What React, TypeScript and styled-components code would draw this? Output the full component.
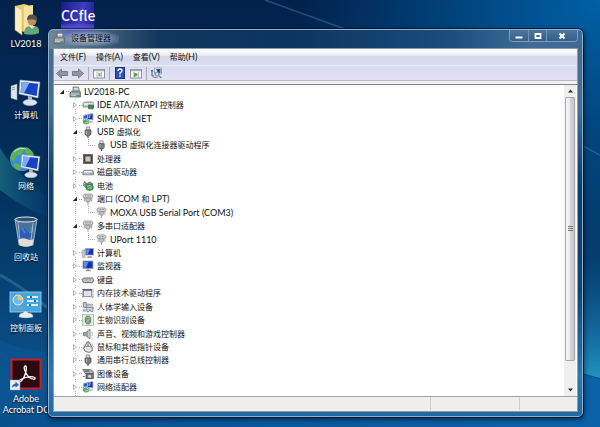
import React from 'react';
import styled, { createGlobalStyle, css } from 'styled-components';

const GlobalStyle = createGlobalStyle`
  * { box-sizing: border-box; }
  html, body, #root { height: 100%; margin: 0; }
  body {
    font: 8px/12px "Open Sans", "Noto Sans CJK SC", sans-serif;
    color: #111;
    overflow: hidden;
  }
  button {
    font: inherit;
    color: inherit;
    border: 0;
    padding: 0;
    margin: 0;
    background: none;
  }
  svg { display: block; flex: none; }
`;

/* ---------- Text ---------- */

const Latin = styled.span`
  font-family: Lato, sans-serif;
  font-size: 9px;
`;

const Label = ({ text }: { text: string }) => (
  <span>
    {text.split(/([\x20-\x7e\n]+)/).filter(Boolean).map((run, i) => (
      /^[\x20-\x7e\n]/.test(run) ? <Latin key={i}>{run}</Latin> : run
    ))}
  </span>
);

/* ---------- Desktop ---------- */

const Desktop = styled.main`
  position: relative;
  height: 100%;
  overflow: hidden;
  background:
    radial-gradient(ellipse 300px 260px at 100% 0%, #0061a6 0%, rgba(0, 97, 166, 0) 100%),
    linear-gradient(180deg, #02224c 0%, #032a56 25%, #033562 48%, #074577 70%, #0a4f88 86%, #085394 100%);
`;

const Wallpaper = styled.svg`
  position: absolute;
  inset: 0;
  width: 100%;
  height: 100%;
`;

const IconColumn = styled.nav`
  position: relative;
  display: flex;
  flex-direction: column;
  gap: 13px;
  width: 52px;
  padding-top: 2px;
`;

const Shortcut = styled.button`
  display: flex;
  flex-direction: column;
  align-items: center;
  height: 58px;
  gap: 2px;
  color: #fff;
  line-height: 11px;
  white-space: pre;
  text-shadow: 0 1px 2px #000;
`;

const Picture = styled.span`
  display: grid;
  place-items: end center;
  height: 34px;
`;

const FlexShortcut = styled.button`
  position: absolute;
  left: 61px;
  top: 2px;
  width: 33px;
  height: 32px;
  color: #f0f0ff;
  background:
    linear-gradient(transparent 21px, rgba(110, 95, 225, 0.55) 24px),
    linear-gradient(100deg, #1b1a86, #3f3cc0 60%, #201b8c);
  font: 500 14px/24px "Noto Sans CJK SC", sans-serif;
  padding-bottom: 6px;
`;

/* ---------- Window ---------- */

const Window = styled.section`
  position: absolute;
  inset: 29px 17px 10px 48px;
  display: flex;
  flex-direction: column;
  padding: 0 4px 4px;
  border: 1px solid #8fb0cb;
  border-radius: 5px;
  background: linear-gradient(90deg, #6f8798 0, #12365d 110px, #0b3560 45%, #1b4c7b 75%, #3e6c97 90%, #3d6b94 100%);
  box-shadow: 0 0 0 1px rgba(0, 16, 40, 0.75), 1px 2px 5px rgba(0, 10, 30, 0.7);
`;

const FrameTint = styled.div`
  position: absolute;
  inset: 19px 0 0;
  border-radius: 0 0 4px 4px;
  background: linear-gradient(180deg, #496b87 0, #47708f 60px, #123f6b 130px, #13436f 240px, #2f79ac 325px, #2169a2 100%);
`;

const TitleBar = styled.header`
  position: relative;
  display: flex;
  align-items: flex-start;
  height: 18px;
`;

const TitleGlow = styled.h1`
  position: relative;
  display: flex;
  align-items: center;
  gap: 6px;
  height: 16px;
  margin: 0;
  padding-right: 8px;
  flex: none;
  font-size: 8px;
  font-weight: 400;
  color: #050c18;
  background: radial-gradient(ellipse at 54% 55%, rgba(190, 205, 218, 0.75) 0%, rgba(150, 175, 200, 0.45) 45%, transparent 72%);
  text-shadow: 0 0 3px #b9c9d6;
`;

const Reflection = styled.span`
  position: absolute;
  left: 10px;
  top: 0;
  width: 32px;
  height: 5px;
  background: #5a50d0;
  filter: blur(3px);
`;

const Caption = styled.div`
  display: flex;
  margin-left: auto;
  height: 12px;
  border: 1px solid #7d9db8;
  border-top: 0;
  border-radius: 0 0 4px 4px;
`;

const CaptionButton = styled.button<{ $wide?: boolean }>`
  display: grid;
  place-items: center;
  width: ${(p) => (p.$wide ? 31 : 18)}px;
  background: linear-gradient(#4e769c, #345f8b);
  & + & { border-left: 1px solid #7193b0; }
  &:first-child { border-radius: 0 0 0 3px; }
  &:last-child { border-radius: 0 0 3px 0; }
`;

const Client = styled.div`
  position: relative;
  flex: 1;
  min-height: 0;
  display: flex;
  flex-direction: column;
  border: 1px solid #8b9dad;
  background: #f2f2f5;
`;

const MenuBar = styled.nav`
  display: flex;
  gap: 10px;
  height: 16px;
  padding-left: 6px;
  background: linear-gradient(#fff 0, #eef0f8 6px, #d5daeb 7px, #d8ddf0 100%);
`;

const MenuButton = styled.button`
  line-height: 16px;
`;

const ToolBar = styled.div`
  display: flex;
  align-items: center;
  gap: 4px;
  height: 16px;
  padding-left: 2px;
  border-top: 1px solid #eceef8;
  border-bottom: 1px solid #b8bac8;
  background: linear-gradient(#d9dbf1, #e2e2f5);
`;

const ToolButton = styled.button`
  display: grid;
  place-items: center;
  width: 12px;
  height: 13px;
`;

const Separator = styled.span`
  width: 1px;
  height: 13px;
  background: #a5a9bb;
`;

const Pane = styled.div`
  flex: 1;
  min-height: 0;
  display: flex;
  margin-top: 3px;
  border-top: 1px solid #808388;
  background: #fff;
`;

const Tree = styled.ul`
  flex: 1;
  display: flex;
  flex-direction: column;
  margin: 0;
  padding: 0 0 2px 4px;
  list-style: none;
  background: repeating-linear-gradient(180deg, #b5b5b5 0 1px, transparent 1px 2px) 21px 0 / 1px 100% no-repeat;
`;

const Item = styled.li<{ $depth: number }>`
  flex: 1;
  display: flex;
  align-items: center;
  min-height: 0;
  padding-left: ${(p) => p.$depth * 13}px;
  white-space: nowrap;
  ${(p) => p.$depth === 0 && css`background: #fff;`}
`;

const Expander = styled.button`
  display: grid;
  place-items: center;
  width: 8px;
  height: 8px;
  flex: none;
  background: #fff;
`;

const Dash = styled.span`
  width: 3px;
  border-top: 1px dotted #a8a8a8;
`;

const Elbow = styled.span`
  align-self: flex-start;
  width: 7px;
  height: 7px;
  margin-left: 4px;
  border: 1px dotted #a8a8a8;
  border-width: 0 0 1px 1px;
`;

const Glyph = styled.span`
  display: grid;
  place-items: center;
  width: 12px;
  margin-right: 3px;
  flex: none;
`;

const ScrollBar = styled.div`
  display: flex;
  flex-direction: column;
  width: 12px;
  margin-right: 1px;
  background: #efefef;
`;

const ScrollArrow = styled.button`
  display: grid;
  place-items: center;
  height: 12px;
`;

const Track = styled.div`
  flex: 1;
  padding-bottom: 23px;
`;

const Thumb = styled.div`
  display: grid;
  place-items: center;
  height: 100%;
  margin: 0 1px;
  border: 1px solid #a9a9ab;
  border-radius: 1px;
  background: linear-gradient(90deg, #f8f8f8 0, #e9e9eb 45%, #cfcfd2 60%, #c9c9cd 100%);
`;

const StatusBar = styled.footer`
  display: grid;
  grid-template-columns: 375fr 89fr 58fr;
  height: 15px;
  border-top: 1px solid #9fa3a5;
  background: #f0eeed;
`;

const StatusCell = styled.span`
  margin-bottom: 1px;
  & + & { border-left: 1px solid #cfcdcc; }
`;

/* ---------- Small device icons ---------- */

type IconName =
  | 'computer' | 'ide' | 'net' | 'usb' | 'cpu' | 'disk' | 'battery' | 'port' | 'pc'
  | 'monitor' | 'keyboard' | 'memory' | 'hid' | 'finger' | 'sound' | 'mouse' | 'camera';

const glyphs: Record<IconName, React.ReactNode> = {
  computer: (
    <>
      <path d="M4 1h5l1 1v4H4z" fill="#aab4bd" stroke="#66717b" strokeWidth=".7" />
      <path d="M5 2.5h4M5 4h4" stroke="#eef3f6" strokeWidth=".8" />
      <path d="M1 7l2-2h8l.5 2v4H1z" fill="#8d979f" stroke="#535d66" strokeWidth=".7" />
      <path d="M2 8h8M2 9.7h5" stroke="#dce2e6" strokeWidth=".8" />
      <path d="M8.5 9.7h2" stroke="#3a9a50" />
    </>
  ),
  ide: (
    <>
      <path d="M1 4.5l1.5-1.5h8L12 4.5V8H1z" fill="#c4c8cb" stroke="#73797e" strokeWidth=".8" />
      <path d="M2 5h9" stroke="#fff" />
      <rect x="6.5" y="6" width="5" height="3.5" fill="#3f8a4d" stroke="#266334" strokeWidth=".6" />
      <path d="M7.5 9.5v1.2M9 9.5v1.2M10.5 9.5v1.2" stroke="#555" strokeWidth=".6" />
    </>
  ),
  net: (
    <>
      <circle cx="4.2" cy="8" r="3.4" fill="#57a869" />
      <path d="M1.5 7q2-2 3.5 0t3 1M3 10.5q1-2 3-.6" stroke="#c7e9cf" strokeWidth=".8" fill="none" />
      <path d="M1.500 2.500l4-1v4l-4 .5z" fill="#2f55c9" stroke="#a8b6cf" strokeWidth=".8" />
      <path d="M5.500 1.500l5.500-1v6.500l-5.500-.7z" fill="#1733b5" stroke="#a8b6cf" strokeWidth=".9" />
      <path d="M6.500 2.400l2.600-.5-1.600 3.400-1-.2z" fill="#7fa2ee" />
      <ellipse cx="9" cy="9" rx="2.5" ry="1" fill="#bcc4cc" />
    </>
  ),
  usb: (
    <>
      <rect x="4.2" y="1" width="3.6" height="3" fill="#dedede" stroke="#777" strokeWidth=".7" />
      <path d="M3 4h6v4L7.600 9.800H4.400L3 8z" fill="#7c7f82" stroke="#45484b" strokeWidth=".7" />
      <path d="M4.500 4.700V8" stroke="#c1c4c6" strokeWidth=".9" />
      <path d="M6 9.800V12" stroke="#555" strokeWidth="1.2" />
    </>
  ),
  cpu: (
    <>
      <rect x="1" y="1" width="10" height="10" rx=".6" fill="#57534e" />
      <rect x="1.500" y="1.500" width="9" height="9" fill="none" stroke="#8d8880" strokeDasharray="1 1" strokeWidth=".8" />
      <rect x="3" y="3" width="6" height="6" fill="#c8c4bb" stroke="#24221f" strokeWidth=".6" />
    </>
  ),
  disk: (
    <>
      <path d="M.8 6.500q0-2.300 3-2.300h5q2.800 0 2.800 2.300v2.300H.8z" fill="#b8bdc1" stroke="#73797e" strokeWidth=".8" />
      <path d="M2 5.800h8" stroke="#f5f7f8" strokeWidth="1.2" />
      <path d="M8.500 7.800h2" stroke="#4aa657" />
    </>
  ),
  battery: (
    <>
      <path d="M1 5l7-3 3 2-6 4z" fill="#93999b" stroke="#54595b" strokeWidth=".7" />
      <path d="M.8 3.500l3-1.300M2 1l2 3" stroke="#555" strokeWidth=".8" />
      <ellipse cx="7.500" cy="7.300" rx="3.800" ry="3.200" fill="#3f9a4d" stroke="#24622e" strokeWidth=".6" />
      <path d="M5 6.600q2.300-2 4.500-.4M5.500 9q2-1.800 4.500-.8" stroke="#b6e3b9" strokeWidth=".8" fill="none" />
    </>
  ),
  port: (
    <>
      <path d="M1 2.500L2.300 1h7.400L11 2.500 10 5H2z" fill="#d3d6d8" stroke="#8b8f92" strokeWidth=".8" />
      <path d="M3 2.800h6" stroke="#666" strokeWidth=".8" strokeDasharray="1 .7" />
      <path d="M3.700 5h4.600v2.400L7.400 9H4.600l-.9-1.600z" fill="#bcc0c3" stroke="#84888b" strokeWidth=".7" />
      <path d="M6 9v3M2.300 5v3.500M9.700 5v3.500" stroke="#999da0" strokeWidth="1" />
    </>
  ),
  pc: (
    <>
      <rect x=".8" y="3" width="2.200" height="7.500" fill="#cdd2d8" stroke="#7b838b" strokeWidth=".6" />
      <rect x="3.500" y="1.500" width="8" height="6.500" fill="#1733b5" stroke="#9aa7bd" strokeWidth=".8" />
      <path d="M4.200 2.200h3.800L5.800 7.300H4.200z" fill="#6f91e6" />
      <path d="M5.300 10h4.500" stroke="#8d969f" strokeWidth="1.500" />
    </>
  ),
  monitor: (
    <>
      <rect x="1" y="1" width="10" height="7.500" fill="#1733b5" stroke="#9aa7bd" strokeWidth=".9" />
      <path d="M1.800 1.800h4.700L4 7.800H1.800z" fill="#6386e2" />
      <path d="M6 8.500v1.300M3.700 10.500h5" stroke="#8d969f" strokeWidth="1.300" />
    </>
  ),
  keyboard: (
    <>
      <rect x=".7" y="4" width="10.600" height="4.600" rx="1.600" fill="#d8d8d8" stroke="#555" strokeWidth=".9" />
      <path d="M2.300 5.600h7.500M2.300 7h7.500" stroke="#777" strokeWidth=".7" strokeDasharray="1 .5" />
    </>
  ),
  memory: (
    <>
      <rect x="1.500" y="2.500" width="8" height="7" fill="#e3e2f2" stroke="#7d7c99" strokeWidth=".8" />
      <path d="M1 3h9" stroke="#4f4d7c" strokeWidth="1.400" />
      <path d="M.8 2v9M11 2v8.500H9.500" stroke="#555" strokeWidth=".7" fill="none" strokeDasharray="1.200 .5" />
    </>
  ),
  hid: (
    <>
      <path d="M1 2l3-1 .8 5L2 7z" fill="#c5c8cb" stroke="#6b7074" strokeWidth=".8" />
      <path d="M5 3.200h6.300M5 5h6.300" stroke="#8a8f93" strokeWidth="1.100" />
      <path d="M4.500 6.500h6.800l-.5 4.200H9L8 8.700 6.800 10.700H5z" fill="#c5d5dc" stroke="#5b7684" strokeWidth=".7" />
      <path d="M.8 8.300h3v2.200h-3z" fill="#9da2a6" />
    </>
  ),
  finger: (
    <>
      <rect x=".6" y=".6" width="10.800" height="10.800" fill="#dcebdc" stroke="#9cbb9e" strokeWidth=".7" />
      <ellipse cx="6" cy="6" rx="2.800" ry="4" fill="#b9c6ba" stroke="#4f5f52" strokeWidth=".8" />
      <ellipse cx="6" cy="6.200" rx="1.200" ry="2.300" fill="none" stroke="#4f5f52" strokeWidth=".8" />
      <path d="M4 8.500l4-4" stroke="#dcebdc" strokeWidth=".5" />
    </>
  ),
  sound: (
    <>
      <path d="M1.500 4.500h2.300L8 1v10L3.800 7.800H1.500z" fill="#9da2a6" stroke="#63686c" strokeWidth=".7" />
      <path d="M7 2.500v7" stroke="#e6e9eb" />
      <path d="M9.700 4q1.300 2 0 4" fill="none" stroke="#9da2a6" strokeWidth=".8" />
    </>
  ),
  mouse: (
    <>
      <path d="M5 1h2.200l3 6q.8 4.300-3.600 4.300T1.800 7.500z" fill="#e6e6e6" stroke="#4c4c4c" strokeWidth=".8" />
      <path d="M6 1.500v4M3.600 5.700q2.400-1.600 4.800 0" fill="none" stroke="#666" strokeWidth=".8" />
      <path d="M2.300 3.500L1 8M9.500 2.500l1.800 3" stroke="#888" strokeWidth=".6" />
    </>
  ),
  camera: (
    <>
      <path d="M.7 1.500h7.600l3 2v2H3z" fill="#aeb3b7" stroke="#555b60" strokeWidth=".7" />
      <path d="M2.500 3h5" stroke="#43484c" />
      <rect x="4" y="5.700" width="7.300" height="5" fill="#73797e" stroke="#43484c" strokeWidth=".7" />
      <circle cx="7.600" cy="8.200" r="1.500" fill="#cfd9e2" />
      <path d="M.7 8.500h2.600" stroke="#8a8f93" />
    </>
  ),
};

const DeviceIcon = ({ name, size = 12 }: { name: IconName; size?: number }) => (
  <svg width={size} height={size} viewBox="0 0 12 12" aria-hidden="true">{glyphs[name]}</svg>
);

/* ---------- Desktop icons ---------- */

const UserFolder = () => (
  <svg width="32" height="34" viewBox="0 0 32 34">
    <path d="M5 4l9-2 4 1v25l-4 2-9-4z" fill="#e9ca72" />
    <path d="M14 4l9-1v24l-9 3z" fill="#f5e3a0" />
    <path d="M5 4l7 4v25l-7-5z" fill="#fbf0bd" stroke="#cda84c" strokeWidth=".5" />
    <circle cx="22" cy="19" r="4.500" fill="#c48b5f" />
    <path d="M17 18q0-6 5.500-5.500T27 19q-4-3-10-1z" fill="#54514a" />
    <path d="M14 32q0-7 5-8l3 2 3-2q5 1 4 7-6 3-15 1z" fill="#68a57d" />
    <path d="M20 24l2 3 3-3z" fill="#e2eadf" />
  </svg>
);

const Screen = () => (
  <>
    <path d="M11 3l20 2-2 16-19-4z" fill="#e4edf5" stroke="#93a6ba" strokeWidth=".5" />
    <path d="M12.500 5l16.700 1.700-1.500 12.300-16-3.400z" fill="#1740c4" />
    <path d="M12.500 5l8 .8L15 16.300l-3.300-.7z" fill="#7fa9f5" />
    <path d="M19 19l4 1v4h-4z" fill="#aebac5" />
    <ellipse cx="21" cy="25.500" rx="7" ry="3.200" fill="#dbe3ea" stroke="#8fa0ae" strokeWidth=".5" />
  </>
);

const Computer = () => (
  <svg width="34" height="30" viewBox="0 0 34 30">
    <path d="M2 9l6-2v16l-6-2z" fill="#dfe5ea" stroke="#8c9aa6" strokeWidth=".5" />
    <path d="M3 11l3-1M3 13l3-1" stroke="#76838f" strokeWidth=".7" />
    <Screen />
  </svg>
);

const Network = () => (
  <svg width="34" height="32" viewBox="0 0 34 32">
    <circle cx="13" cy="13" r="12" fill="#3b8ed0" />
    <path d="M3 7q4-6 10-6l2 4-4 4-4 1-3 6-3-4zM17 1q6 2 8 8l-5 1-4-4zM6 17l6 2-1 6q-5-2-7-6z" fill="#63b054" />
    <path d="M5 6q5-5 12-3" stroke="#c9eec3" fill="none" />
    <g transform="translate(3 6) scale(.9)"><Screen /></g>
  </svg>
);

const RecycleBin = () => (
  <svg width="28" height="34" viewBox="0 0 28 34">
    <path d="M3 4h22l-4 26q-7 3-14 0z" fill="#9fb9cc" fillOpacity=".45" stroke="#c9d7e2" strokeWidth=".7" />
    <ellipse cx="14" cy="4.500" rx="11" ry="2.500" fill="#31516d" stroke="#e3edf4" />
    <path d="M8 15l5-2 3 4 4 1-1 5-9 1-3-4z" fill="#2a5db8" />
    <path d="M10 13l3 5M19 12l2 4-4 2" stroke="#4c84dc" strokeWidth="1.500" fill="none" />
    <path d="M6.500 25q4-3 8-1t7 0l-1 6q-7 3-13 0z" fill="#e2ded6" />
    <path d="M6 7l2 20M21 8l-2 17" stroke="#fff" strokeOpacity=".5" />
  </svg>
);

const ControlPanel = () => (
  <svg width="34" height="30" viewBox="0 0 34 30">
    <rect x="1" y="2" width="31" height="20" fill="#4aa4dc" stroke="#9bd5f4" strokeWidth=".8" />
    <circle cx="9" cy="10" r="5" fill="#6fbce8" stroke="#d8f0fc" />
    <path d="M9 10V5a5 5 0 0 1 5 5z" fill="#f2c36b" />
    <path d="M18 7h11M18 11h11M18 15h11" stroke="#d8f0fc" strokeWidth="1.800" />
    <path d="M21 7h2M25 11h2M20 15h2" stroke="#1f6da8" strokeWidth="1.800" />
    <path d="M5 18h8" stroke="#e58a6f" strokeDasharray="2 1" />
    <path d="M10 27q0-4 4-4 2-4 5 0 5 0 5 4-7 2-14 0z" fill="#e9eef2" stroke="#a5b2bd" strokeWidth=".5" />
  </svg>
);

const Acrobat = () => (
  <svg width="32" height="33" viewBox="0 0 32 33">
    <rect x="1.500" y="1.500" width="29" height="29" fill="#2c0b10" stroke="#c81f2a" strokeWidth="2" />
    <path
      d="M15.500 8c-2 0-1.500 3 .2 6.500 2 4 5 6.700 8 6.700 2 0 2-2-.5-2.400-4-.6-9 .7-12.500 2.700-2.500 1.500-2 3-.7 2.500 2-1 4.500-5.500 5.700-9.500.8-3 1-6.500-.2-6.500z"
      fill="none" stroke="#fff" strokeWidth="1.300"
    />
    <rect x="0" y="22" width="10" height="10" fill="#e9f0f8" stroke="#8798a8" strokeWidth=".5" />
    <path d="M2 30q0-4 3.500-4.500V23.500L9 27l-3.500 2.500V28Q3.500 28 2 30z" fill="#2866b4" />
  </svg>
);

const shortcuts = [
  { label: 'LV2018', icon: <UserFolder /> },
  { label: '计算机', icon: <Computer /> },
  { label: '网络', icon: <Network /> },
  { label: '回收站', icon: <RecycleBin /> },
  { label: '控制面板', icon: <ControlPanel /> },
  { label: 'Adobe\nAcrobat DC', icon: <Acrobat /> },
];

/* ---------- Toolbar drawings ---------- */

const Arrow = ({ flip }: { flip?: boolean }) => (
  <svg width="12" height="11" viewBox="0 0 12 11">
    <path
      d={flip ? 'M11.500 5.500L6.500 1v2.500h-6v4h6V10z' : 'M.5 5.500L5.500 1v2.500h6v4h-6V10z'}
      fill="#92979f" stroke="#6a6f78" strokeWidth=".8"
    />
  </svg>
);

const PaneIcon = ({ play }: { play?: boolean }) => (
  <svg width="12" height="11" viewBox="0 0 12 11">
    <rect x=".5" y="1.500" width="11" height="8.500" fill="#f8f9f8" stroke="#8e949c" />
    <path d="M1 2.500h10" stroke="#a9afba" strokeWidth="1.500" />
    <path d="M4 4v6M8.500 4v6M5 5.500h2.500M5 8h2.500" stroke="#a3a9a5" strokeWidth=".8" />
    {play ? <path d="M4 4.500l4 2.300L4 9z" fill="#45a53e" /> : <path d="M5.500 5.500h2V8h-2z" fill="#6eae63" />}
  </svg>
);

const HelpIcon = () => (
  <svg width="10" height="12" viewBox="0 0 10 12">
    <rect x=".5" y=".5" width="9" height="11" fill="#2b53b8" stroke="#173682" />
    <path d="M3 4q0-2 2-2t2 1.800Q7 5 5 6v1.500M5 8.500V10" fill="none" stroke="#fff" strokeWidth="1.300" />
  </svg>
);

const ScanIcon = () => (
  <svg width="12" height="12" viewBox="0 0 12 12">
    <path d="M3.500 1h7v6h-7z" fill="#edf2f7" stroke="#8995a3" strokeWidth=".8" />
    <path d="M5 2h4.500v4H7z" fill="#2c4da5" />
    <path d="M1 3v6h2M1 3l-.7 1.500M1 3l1 1.500" stroke="#555f6b" fill="none" />
    <circle cx="6" cy="7" r="2" fill="#c9dced" stroke="#5d6c7b" strokeWidth=".8" />
    <path d="M7.500 8.500l3 2.500M2.500 10.500h4" stroke="#747e89" strokeWidth="1.100" />
  </svg>
);

/* ---------- Data ---------- */

type Device = { label: string; icon: IconName; depth: number; open?: boolean };

const devices: Device[] = [
  { label: 'LV2018-PC', icon: 'computer', depth: 0, open: true },
  { label: 'IDE ATA/ATAPI 控制器', icon: 'ide', depth: 1 },
  { label: 'SIMATIC NET', icon: 'net', depth: 1 },
  { label: 'USB 虚拟化', icon: 'usb', depth: 1, open: true },
  { label: 'USB 虚拟化连接器驱动程序', icon: 'usb', depth: 2 },
  { label: '处理器', icon: 'cpu', depth: 1 },
  { label: '磁盘驱动器', icon: 'disk', depth: 1 },
  { label: '电池', icon: 'battery', depth: 1 },
  { label: '端口 (COM 和 LPT)', icon: 'port', depth: 1, open: true },
  { label: 'MOXA USB Serial Port (COM3)', icon: 'port', depth: 2 },
  { label: '多串口适配器', icon: 'port', depth: 1, open: true },
  { label: 'UPort 1110', icon: 'port', depth: 2 },
  { label: '计算机', icon: 'pc', depth: 1 },
  { label: '监视器', icon: 'monitor', depth: 1 },
  { label: '键盘', icon: 'keyboard', depth: 1 },
  { label: '内存技术驱动程序', icon: 'memory', depth: 1 },
  { label: '人体学输入设备', icon: 'hid', depth: 1 },
  { label: '生物识别设备', icon: 'finger', depth: 1 },
  { label: '声音、视频和游戏控制器', icon: 'sound', depth: 1 },
  { label: '鼠标和其他指针设备', icon: 'mouse', depth: 1 },
  { label: '通用串行总线控制器', icon: 'usb', depth: 1 },
  { label: '图像设备', icon: 'camera', depth: 1 },
  { label: '网络适配器', icon: 'net', depth: 1 },
];

const menus = ['文件(F)', '操作(A)', '查看(V)', '帮助(H)'];

const DeviceRow = ({ label, icon, depth, open }: Device) => (
  <Item $depth={depth} role="treeitem" aria-level={depth + 1} aria-expanded={depth < 2 ? !!open : undefined}>
    {depth < 2 ? (
      <>
        <Expander aria-label={`${open ? '折叠' : '展开'} ${label}`}>
          <svg width="6" height="6" viewBox="0 0 6 6">
            {open
              ? <path d="M5 .8V5H.8z" fill="#222" />
              : <path d="M1.500 .6L4.500 3 1.500 5.400z" fill="#fff" stroke="#a0a0a0" strokeWidth=".8" />}
          </svg>
        </Expander>
        <Dash />
      </>
    ) : <Elbow />}
    <Glyph><DeviceIcon name={icon} size={depth === 2 ? 11 : 12} /></Glyph>
    <Label text={label} />
  </Item>
);

export default function App() {
  return (
    <>
      <GlobalStyle />
      <Desktop>
        <Wallpaper viewBox="0 0 600 427" preserveAspectRatio="none" aria-hidden="true">
          <defs>
            <linearGradient id="teal" x1="0" y1="0" x2="1" y2="0">
              <stop offset="0" stopColor="#1b6f84" stopOpacity=".75" />
              <stop offset="1" stopColor="#0a4a78" stopOpacity="0" />
            </linearGradient>
            <linearGradient id="glow" x1="0" y1="0" x2="0" y2="1">
              <stop offset="0" stopColor="#0a5a92" stopOpacity="0" />
              <stop offset="1" stopColor="#2191bd" />
            </linearGradient>
            <linearGradient id="base" x1="0" y1="0" x2="1" y2="0">
              <stop offset="0" stopColor="#08508c" />
              <stop offset="1" stopColor="#0b62aa" />
            </linearGradient>
          </defs>
          <path d="M0 148Q20 180 60 205V222Q25 210 0 190z" fill="url(#teal)" />
          <path d="M0 275Q25 288 60 318" stroke="#39759a" strokeOpacity=".6" strokeWidth="3" fill="none" />
          <path d="M0 340Q20 350 48 352V427H0z" fill="#0b5b9a" fillOpacity=".45" />
          <path d="M570 255H600V378L570 370z" fill="url(#glow)" />
          <path d="M570 371L600 379V427H0V416H570z" fill="url(#base)" />
          <path d="M265 0L345 29M583 146L600 155" stroke="#4a80ab" strokeOpacity=".45" strokeWidth="1.500" />
        </Wallpaper>

        <IconColumn aria-label="桌面">
          {shortcuts.map((s) => (
            <Shortcut key={s.label}>
              <Picture>{s.icon}</Picture>
              <Label text={s.label} />
            </Shortcut>
          ))}
        </IconColumn>
        <FlexShortcut>CCfle</FlexShortcut>

        <Window aria-label="设备管理器">
          <FrameTint />
          <TitleBar>
            <Reflection />
            <TitleGlow>
              <DeviceIcon name="computer" />
              <span>设备管理器</span>
            </TitleGlow>
            <Caption>
              <CaptionButton aria-label="最小化">
                <svg width="8" height="8" viewBox="0 0 8 8"><path d="M.5 5.500h7" stroke="#fff" strokeWidth="2" /></svg>
              </CaptionButton>
              <CaptionButton aria-label="最大化">
                <svg width="8" height="8" viewBox="0 0 8 8"><path d="M1.500 2h5v4h-5z" fill="none" stroke="#fff" strokeWidth="1.800" /></svg>
              </CaptionButton>
              <CaptionButton $wide aria-label="关闭">
                <svg width="8" height="8" viewBox="0 0 8 8"><path d="M1.500 1.500l5 5M6.500 1.500l-5 5" stroke="#fff" strokeWidth="1.900" /></svg>
              </CaptionButton>
            </Caption>
          </TitleBar>

          <Client>
            <MenuBar>
              {menus.map((m) => <MenuButton key={m}><Label text={m} /></MenuButton>)}
            </MenuBar>
            <ToolBar role="toolbar">
              <ToolButton aria-label="后退"><Arrow /></ToolButton>
              <ToolButton aria-label="前进"><Arrow flip /></ToolButton>
              <Separator />
              <ToolButton aria-label="显示控制台树"><PaneIcon /></ToolButton>
              <Separator />
              <ToolButton aria-label="帮助"><HelpIcon /></ToolButton>
              <ToolButton aria-label="操作窗格"><PaneIcon play /></ToolButton>
              <Separator />
              <ToolButton aria-label="扫描检测硬件改动"><ScanIcon /></ToolButton>
            </ToolBar>
            <Pane>
              <Tree role="tree">
                {devices.map((d, i) => <DeviceRow key={i} {...d} />)}
              </Tree>
              <ScrollBar>
                <ScrollArrow aria-label="向上滚动">
                  <svg width="5" height="4" viewBox="0 0 5 4"><path d="M0 3.500L2.500 .5 5 3.500z" fill="#333" /></svg>
                </ScrollArrow>
                <Track>
                  <Thumb>
                    <svg width="5" height="6" viewBox="0 0 5 6"><path d="M0 .5h5M0 2.500h5M0 4.500h5" stroke="#777" /></svg>
                  </Thumb>
                </Track>
                <ScrollArrow aria-label="向下滚动">
                  <svg width="5" height="4" viewBox="0 0 5 4"><path d="M0 .5h5L2.500 3.500z" fill="#333" /></svg>
                </ScrollArrow>
              </ScrollBar>
            </Pane>
            <StatusBar>
              <StatusCell />
              <StatusCell />
              <StatusCell />
            </StatusBar>
          </Client>
        </Window>
      </Desktop>
    </>
  );
}
